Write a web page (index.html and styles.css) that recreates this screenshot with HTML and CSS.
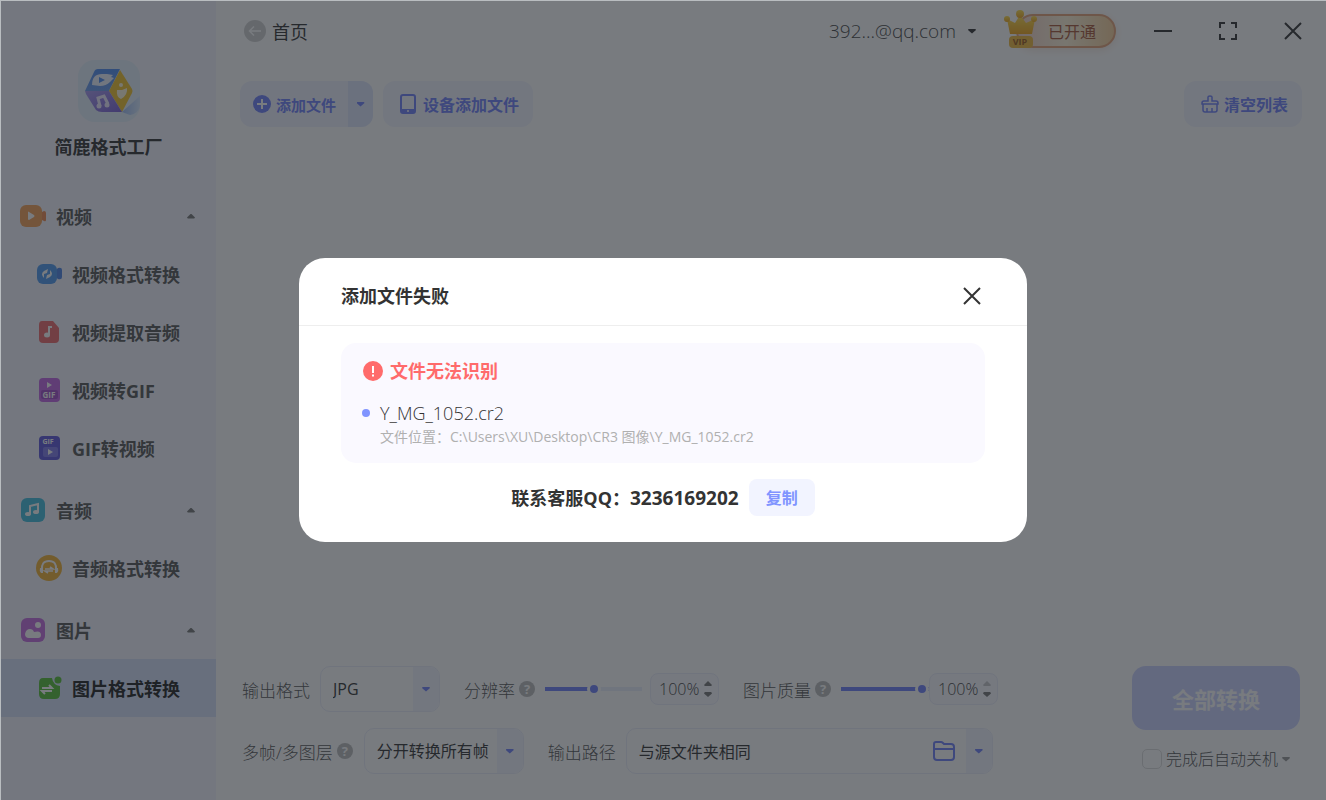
FILE: index.html
```html
<!DOCTYPE html>
<html lang="zh-CN">
<head>
    <meta charset="UTF-8">
    <meta name="viewport" content="width=device-width, initial-scale=1.0">
    <title>简鹿格式工厂</title>
    <link rel="stylesheet" href="styles.css">
</head>
<body>

<div class="app">
    <aside class="sidebar">
        <div class="brand">
            <svg class="logo" viewBox="0 0 62 62">
                <defs>
                    <linearGradient id="lb" x1="0" y1="0" x2="0" y2="1"><stop offset="0" stop-color="#4f8df2"/><stop offset="1" stop-color="#6c9cec"/></linearGradient>
                    <linearGradient id="lp" x1="0" y1="0" x2="1" y2="1"><stop offset="0" stop-color="#a99af0"/><stop offset="1" stop-color="#7a5fd8"/></linearGradient>
                    <linearGradient id="ls" x1="0" y1="0" x2="1" y2="0"><stop offset="0" stop-color="#9dbdf5"/><stop offset="1" stop-color="#d9e9ff"/></linearGradient>
                </defs>
                <rect width="62" height="62" rx="17" fill="#e3effc"/>
                <path d="M44 52 L62 36 V46 Q60 54 52 55 Z" fill="url(#ls)"/>
                <path d="M20 9 H42 L31 31 H7 L16 12 Q17 9 20 9Z" fill="url(#lb)"/>
                <path d="M42 10 L54 29 Q55 31 54 33 L44 52 L31 31Z" fill="#f2c42c"/>
                <path d="M7 31 H31 L44 52 H24 Q20 52 18 50 L8 34Z" fill="url(#lp)"/>
                <path d="M14 25 Q14 14 24 14 H29 L35 15 L33 17 L36 18 L32 22 Q28 26 22 26Z" fill="#eef3ff"/>
                <path d="M21 17 l6 3 -6 3z" fill="#4f8df2"/>
                <path d="M22 46 L20 38 L26 36 L30 44" fill="none" stroke="#eee9ff" stroke-width="3"/>
                <circle cx="21" cy="46" r="2.500" fill="#eee9ff"/>
                <circle cx="29" cy="45" r="2.500" fill="#eee9ff"/>
                <circle cx="43" cy="25" r="2" fill="#fff8dd"/>
                <path d="M39 30 l5 0 5 -2 q1 7 -6 11 q-5 -2 -4 -9z" fill="#fff8dd"/>
            </svg>
            <h1>简鹿格式工厂</h1>
        </div>

        <nav class="menu">
            <section class="group">
                <button class="group-title" type="button">
                    <svg class="icon" viewBox="0 0 26 26">
                        <path d="M20 10 L24 8 Q26 8 26 10 V17 Q26 19 24 18 L20 16Z" fill="#f08a50"/>
                        <rect y="2" width="22" height="22" rx="6" fill="#f6a155"/>
                        <path d="M8 9 Q8 8 9 9 L14 12 Q15 13 14 14 L9 17 Q8 17 8 16Z" fill="#fff"/>
                    </svg>
                    视频
                    <span class="up"></span>
                </button>
                <a class="item" href="#">
                    <svg class="icon" viewBox="0 0 26 26">
                        <path d="M18 11 L22 7 Q26 6 26 9 V16 Q26 19 22 18 L18 15Z" fill="#4b82e6"/>
                        <rect x="1" y="3" width="20" height="20" rx="6" fill="#4f9af0"/>
                        <path d="M8 17 Q4 13 8 10 L12 8 L11 12 L8 13Z M14 9 Q18 13 14 16 L10 18 L11 14 L14 13Z" fill="#fff"/>
                    </svg>
                    视频格式转换
                </a>
                <a class="item" href="#">
                    <svg class="icon" viewBox="0 0 26 26">
                        <path d="M6 2 H17 L23 9 V20 Q23 24 19 24 H7 Q3 24 3 20 V6 Q3 2 6 2Z" fill="#ef6a6c"/>
                        <ellipse cx="11" cy="16" rx="3" ry="2.500" fill="#fff"/>
                        <path d="M13 16 V8 L16 8" fill="none" stroke="#fff" stroke-width="2"/>
                    </svg>
                    视频提取音频
                </a>
                <a class="item" href="#">
                    <svg class="icon" viewBox="0 0 26 26">
                        <rect x="3" y="1" width="21" height="24" rx="4" fill="#c264e6"/>
                        <path d="M11 5 l5 3 -5 3z" fill="#fff"/>
                        <rect x="5" y="13" width="17" height="9" rx="2" fill="#a04bc8"/>
                        <text x="13" y="21" text-anchor="middle" class="gif-text">GIF</text>
                    </svg>
                    视频转GIF
                </a>
                <a class="item" href="#">
                    <svg class="icon" viewBox="0 0 26 26">
                        <rect x="3" y="1" width="21" height="24" rx="4" fill="#5c55dc"/>
                        <text x="12" y="9" text-anchor="middle" class="gif-text small">GIF</text>
                        <rect x="7" y="12" width="15" height="10" rx="2" fill="#817bea"/>
                        <path d="M12 14 l5 3 -5 3z" fill="#fff"/>
                    </svg>
                    GIF转视频
                </a>
            </section>

            <section class="group">
                <button class="group-title" type="button">
                    <svg class="icon" viewBox="0 0 26 26">
                        <rect x="1" y="1" width="24" height="24" rx="6" fill="#42bfdf"/>
                        <path d="M10 17 V9 L18 7 V15" fill="none" stroke="#fff" stroke-width="2"/>
                        <ellipse cx="8" cy="17" rx="3" ry="2" fill="#fff"/>
                        <ellipse cx="16" cy="15" rx="3" ry="2" fill="#fff"/>
                    </svg>
                    音频
                    <span class="up"></span>
                </button>
                <a class="item" href="#">
                    <svg class="icon" viewBox="0 0 26 26">
                        <circle cx="13" cy="13" r="13" fill="#f2b133"/>
                        <path d="M6 15 Q5 6 13 6 Q21 6 20 15" fill="none" stroke="#fff" stroke-width="2"/>
                        <path d="M4 13 h3 v5 h-2 q-2 -2 -1 -5z M22 13 h-3 v5 h2 q2 -2 1 -5z" fill="#fff"/>
                        <path d="M9 14 H17 L14 12 M17 16 H9 L12 18" fill="none" stroke="#fff" stroke-width="1.600"/>
                    </svg>
                    音频格式转换
                </a>
            </section>

            <section class="group">
                <button class="group-title" type="button">
                    <svg class="icon" viewBox="0 0 26 26">
                        <rect x="1" y="1" width="24" height="24" rx="6" fill="#c56be0"/>
                        <circle cx="18" cy="8" r="3" fill="#fff"/>
                        <path d="M9 21 Q5 21 5 17 Q6 12 10 12 Q13 12 14 15 Q21 13 21 18 Q21 21 18 21Z" fill="#fff"/>
                    </svg>
                    图片
                    <span class="up"></span>
                </button>
                <a class="item active" href="#">
                    <svg class="icon" viewBox="0 0 26 26">
                        <path d="M7 3 H16 Q17 10 24 11 V19 Q24 24 19 24 H8 Q3 24 3 19 V8 Q3 3 7 3Z" fill="#55bf35"/>
                        <circle cx="22" cy="5" r="3.500" fill="#55bf35"/>
                        <path d="M6 13 H16 L13 10 M16 16 H6 L9 19" fill="none" stroke="#fff" stroke-width="2"/>
                    </svg>
                    图片格式转换
                </a>
            </section>
        </nav>
    </aside>

    <main class="main">
        <header class="topbar">
            <a class="home" href="#">
                <svg width="22" height="22" viewBox="0 0 22 22">
                    <circle cx="11" cy="11" r="11" fill="#d0d0d0"/>
                    <path d="M17 11 H6 M10 6.500 L5.500 11 L10 15.500" fill="none" stroke="#fff" stroke-width="1.500"/>
                </svg>
                首页
            </a>
            <button class="account" type="button">392...@qq.com <span class="down"></span></button>
            <button class="vip" type="button">
                <svg class="crown" viewBox="0 0 34 40">
                    <defs><linearGradient id="gold" x1="0" y1="0" x2="0" y2="1"><stop offset="0" stop-color="#ffdf4d"/><stop offset="1" stop-color="#f0a51a"/></linearGradient></defs>
                    <path d="M3 9 L11 13 L16 5 L22 13 L31 9 L28 24 H6Z" fill="url(#gold)"/>
                    <circle cx="3" cy="9" r="3" fill="url(#gold)"/>
                    <circle cx="16" cy="4" r="4" fill="url(#gold)"/>
                    <circle cx="30" cy="9" r="3" fill="url(#gold)"/>
                    <rect x="5" y="26" width="24" height="12" rx="4" fill="#f0b93c"/>
                    <text x="16" y="35" text-anchor="middle" class="vip-text">VIP</text>
                </svg>
                已开通
            </button>
            <div class="window-buttons">
                <button type="button" aria-label="最小化"><svg width="18" height="18" viewBox="0 0 18 18"><path d="M0 9 H18"/></svg></button>
                <button type="button" aria-label="最大化"><svg width="18" height="18" viewBox="0 0 18 18"><path d="M1 6 V1 H6 M12 1 H17 V6 M17 12 V17 H12 M6 17 H1 V12"/></svg></button>
                <button type="button" aria-label="关闭"><svg width="18" height="18" viewBox="0 0 18 18"><path d="M1 1 L17 17 M17 1 L1 17"/></svg></button>
            </div>
        </header>

        <div class="toolbar">
            <div class="split">
                <button class="split-main" type="button">
                    <svg width="18" height="18" viewBox="0 0 18 18">
                        <circle cx="9" cy="9" r="9" fill="#6f80fb"/>
                        <path d="M4 9 H14 M9 4 V14" stroke="#fff" stroke-width="2"/>
                    </svg>
                    添加文件
                </button>
                <button class="split-arrow" type="button" aria-label="更多"><span class="down"></span></button>
            </div>
            <button class="tool" type="button">
                <svg width="16" height="20" viewBox="0 0 16 20">
                    <rect x="1" y="1" width="14" height="18" rx="2" fill="none" stroke="#6f80fb" stroke-width="2"/>
                    <path d="M1 15 H15 V19 H1Z" fill="#6f80fb"/>
                    <circle cx="8" cy="17" r="1" fill="#fff"/>
                </svg>
                设备添加文件
            </button>
            <button class="tool clear" type="button">
                <svg width="18" height="18" viewBox="0 0 18 18" fill="none" stroke="#6f80fb" stroke-width="1.500">
                    <path d="M7 6 V2 Q7 1 9 1 Q11 1 11 2 V6 H15 Q17 6 17 8 V9 H1 V8 Q1 6 3 6Z M2 9 V15 Q2 17 4 17 H14 Q16 17 16 15 V9 M6 13 V17 M11 13 V17"/>
                </svg>
                清空列表
            </button>
        </div>

        <div class="file-area"></div>

        <footer class="settings">
            <div class="options">
                <div class="row">
                    <label for="format">输出格式</label>
                    <div class="select format">
                        <select id="format"><option>JPG</option></select>
                        <span class="arrow"><span class="down"></span></span>
                    </div>
                    <label class="next" for="resolution">分辨率</label>
                    <span class="help">?</span>
                    <input class="range" id="resolution" type="range" min="0" max="200" value="100" style="--value: 50%">
                    <div class="spin">
                        <input type="text" value="100%" aria-label="分辨率百分比">
                        <div class="steps">
                            <button type="button" aria-label="增加"><span class="up"></span></button>
                            <button type="button" aria-label="减少"><span class="down"></span></button>
                        </div>
                    </div>
                    <label class="next" for="quality">图片质量</label>
                    <span class="help">?</span>
                    <input class="range short" id="quality" type="range" min="0" max="100" value="100" style="--value: 100%">
                    <div class="spin">
                        <input type="text" value="100%" aria-label="图片质量百分比">
                        <div class="steps">
                            <button type="button" aria-label="增加" disabled><span class="up"></span></button>
                            <button type="button" aria-label="减少"><span class="down"></span></button>
                        </div>
                    </div>
                </div>
                <div class="row">
                    <label for="frames">多帧/多图层</label>
                    <span class="help">?</span>
                    <div class="select frames">
                        <select id="frames"><option>分开转换所有帧</option></select>
                        <span class="arrow"><span class="down"></span></span>
                    </div>
                    <label class="next" for="path">输出路径</label>
                    <div class="select path">
                        <input id="path" type="text" value="与源文件夹相同">
                        <button class="folder" type="button" aria-label="选择文件夹">
                            <svg width="22" height="20" viewBox="0 0 22 20" fill="none" stroke="#6f80fb" stroke-width="2">
                                <path d="M1 8 V3 Q1 1 3 1 H8 Q9 1 10 2 L11 3 H18 Q21 3 21 6 V16 Q21 19 18 19 H4 Q1 19 1 16 V8 H21"/>
                            </svg>
                        </button>
                        <button class="arrow" type="button" aria-label="更多路径"><span class="down"></span></button>
                    </div>
                </div>
            </div>
            <div class="actions">
                <button class="convert" type="button">全部转换</button>
                <label class="shutdown"><input type="checkbox">完成后自动关机<span class="down"></span></label>
            </div>
        </footer>
    </main>

    <div class="overlay">
        <div class="modal" role="dialog" aria-labelledby="modal-title">
            <div class="modal-header">
                <h2 id="modal-title">添加文件失败</h2>
                <button class="close" type="button" aria-label="关闭">
                    <svg width="18" height="18" viewBox="0 0 18 18"><path d="M1 1 L17 17 M17 1 L1 17"/></svg>
                </button>
            </div>
            <div class="error-box">
                <h3>
                    <svg width="20" height="20" viewBox="0 0 20 20">
                        <circle cx="10" cy="10" r="10" fill="#ff6b6b"/>
                        <path d="M10 5 V12 M10 13.500 V15.500" stroke="#fff" stroke-width="2"/>
                    </svg>
                    文件无法识别
                </h3>
                <ul>
                    <li>
                        <p class="file-name">Y_MG_1052.cr2</p>
                        <p class="file-path">文件位置：C:\Users\XU\Desktop\CR3 图像\Y_MG_1052.cr2</p>
                    </li>
                </ul>
            </div>
            <div class="contact">
                <p>联系客服QQ：<span class="number">3236169202</span></p>
                <button type="button">复制</button>
            </div>
        </div>
    </div>
</div>

</body>
</html>
```

FILE: styles.css
```css
* {
    box-sizing: border-box;
}

body {
    margin: 0;
    font-family: "Open Sans", "Noto Sans CJK SC", sans-serif;
    font-size: 16px;
    font-weight: 300;
    color: #333;
    background: #fff;
}

button, input, select {
    font: inherit;
    color: inherit;
    border: 0;
    padding: 0;
    margin: 0;
    background: none;
}

button {
    display: flex;
    align-items: center;
    justify-content: center;
    cursor: pointer;
    white-space: nowrap;
}

a {
    color: inherit;
    text-decoration: none;
}

h1, h2, h3, p, ul {
    margin: 0;
    padding: 0;
}

h1, h2, h3 {
    font-size: 18px;
    line-height: 26px;
}

svg {
    display: block;
    flex: none;
}

.app {
    position: relative;
    display: flex;
    min-height: 100vh;
    border-top: 1px solid #b9bdc0;
    border-left: 1px solid #b9bdc0;
}

/* small arrows */
.up, .down {
    width: 8px;
    height: 5px;
    background: #777;
    flex: none;
}

.up {
    clip-path: polygon(50% 0, 100% 80%, 90% 100%, 10% 100%, 0 80%);
}

.down {
    clip-path: polygon(10% 0, 90% 0, 100% 30%, 50% 100%, 0 30%);
}

/* sidebar */
.sidebar {
    width: 215px;
    flex: none;
    background: #f4f6fe;
}

.brand {
    display: flex;
    flex-direction: column;
    align-items: center;
    gap: 12px;
    padding: 59px 0 27px;
}

.logo {
    width: 62px;
    height: 62px;
}

.group + .group {
    margin-top: 4px;
}

.group-title, .item {
    display: flex;
    align-items: center;
    justify-content: flex-start;
    gap: 10px;
    width: 100%;
    height: 58px;
    padding: 0 21px 0 19px;
    font-size: 18px;
    font-weight: bold;
    color: #555;
}

.item {
    padding-left: 35px;
}

.item.active {
    background: #d8e2fb;
    color: #222;
}

.group-title .up {
    margin-left: auto;
}

.icon {
    width: 26px;
    height: 26px;
}

.gif-text {
    font: bold 8px "Open Sans", sans-serif;
    fill: #fff;
}

.gif-text.small {
    font-size: 7px;
}

/* main */
.main {
    flex: 1;
    min-width: 0;
    display: flex;
    flex-direction: column;
    padding: 0 24px;
}

.topbar {
    display: flex;
    align-items: center;
    height: 60px;
}

.home {
    display: flex;
    align-items: center;
    gap: 6px;
    padding-left: 4px;
    font-size: 18px;
    font-weight: 400;
}

.account {
    gap: 12px;
    margin-left: auto;
    font-size: 19px;
    color: #444;
}

.account .down {
    background: #333;
}

.vip {
    position: relative;
    height: 34px;
    margin-left: 40px;
    padding: 0 18px 0 30px;
    border: 2px solid #e5a478;
    border-radius: 17px;
    background: linear-gradient(90deg, #f3d2c8, #fff3d8 50%, #f6cf9a);
    box-shadow: 0 2px 8px #f5e6dc;
    color: #a9583a;
    font-weight: 400;
}

.crown {
    position: absolute;
    left: -14px;
    top: -6px;
    width: 34px;
    height: 40px;
}

.vip-text {
    font: bold 9px "Open Sans", sans-serif;
    fill: #9a5a1c;
}

.window-buttons {
    display: flex;
    gap: 47px;
    margin-left: 38px;
}

.window-buttons path, .close path {
    fill: none;
    stroke: #333;
    stroke-width: 2;
}

.toolbar {
    display: flex;
    gap: 10px;
    margin-top: 20px;
    font-weight: bold;
    color: #6f80fb;
}

.split {
    display: flex;
    height: 46px;
    border-radius: 12px;
    overflow: hidden;
    background: #eff2ff;
}

.split-main {
    gap: 5px;
    padding: 0 12px 0 13px;
    font-size: 15px;
}

.split-arrow {
    width: 25px;
    background: #dfe6fd;
}

.toolbar .down, .select .down {
    background: #6f80fb;
}

.tool {
    gap: 7px;
    height: 46px;
    padding: 0 14px 0 17px;
    border-radius: 12px;
    background: #f3f5ff;
}

.tool.clear {
    gap: 5px;
    margin-left: auto;
}

.file-area {
    flex: 1;
}

/* output settings */
.settings {
    display: flex;
    justify-content: space-between;
    align-items: flex-start;
    padding: 0 2px 26px;
}

.options {
    display: flex;
    flex-direction: column;
    gap: 16px;
}

.row {
    display: flex;
    align-items: center;
    height: 46px;
}

.row label {
    font-size: 17px;
    color: #555;
    white-space: nowrap;
}

.row .next {
    margin-left: 24px;
}

.help {
    width: 16px;
    height: 16px;
    margin-left: 4px;
    border-radius: 50%;
    background: #bbb;
    color: #fff;
    font-size: 13px;
    font-weight: bold;
    line-height: 16px;
    text-align: center;
}

.select {
    display: flex;
    height: 46px;
    margin-left: 10px;
    border: 1px solid #eceefb;
    border-radius: 10px;
    overflow: hidden;
    font-weight: 400;
}

.select select, .select input {
    flex: 1;
    min-width: 0;
    padding-left: 12px;
    appearance: none;
}

.format {
    width: 120px;
}

.frames {
    width: 160px;
    margin-left: 11px;
}

.path {
    width: 367px;
}

.arrow {
    display: flex;
    align-items: center;
    justify-content: center;
    width: 26px;
    background: #f3f5ff;
}

.folder {
    width: 44px;
}

.range {
    appearance: none;
    width: 97px;
    height: 14px;
    margin: 0 8px 0 10px;
    background: linear-gradient(90deg, #6f80fb var(--value), #eceffd var(--value)) center / 100% 4px no-repeat;
}

.range.short {
    width: 88px;
    margin-right: 0;
}

.range::-webkit-slider-thumb {
    appearance: none;
    width: 14px;
    height: 14px;
    border: 3px solid #fff;
    border-radius: 50%;
    background: #6f80fb;
}

.spin {
    display: flex;
    align-items: center;
    width: 69px;
    height: 32px;
    border: 1px solid #eceefb;
    border-radius: 8px;
    background: #fafaff;
    color: #444;
}

.spin input {
    flex: 1;
    min-width: 0;
    padding-left: 8px;
}

.steps {
    display: flex;
    flex-direction: column;
    gap: 6px;
    margin-right: 6px;
}

.steps button:disabled {
    opacity: 0.4;
}

.actions {
    display: flex;
    flex-direction: column;
    align-items: center;
    gap: 16px;
}

.convert {
    width: 168px;
    height: 64px;
    border-radius: 14px;
    background: #cbd2ff;
    color: #fff;
    font-size: 22px;
    font-weight: bold;
}

.shutdown {
    display: flex;
    align-items: center;
    gap: 4px;
    color: #555;
    line-height: 26px;
}

.shutdown input {
    appearance: none;
    width: 20px;
    height: 20px;
    border: 1px solid #ddd;
    border-radius: 5px;
}

.shutdown .down {
    background: #999;
}

/* dialog */
.overlay {
    position: absolute;
    inset: 0;
    display: flex;
    align-items: center;
    justify-content: center;
    padding: 0 1px 1px 0;
    background: rgba(30, 35, 42, 0.6);
}

.modal {
    width: 728px;
    border-radius: 26px;
    background: #fff;
}

.modal-header {
    display: flex;
    align-items: center;
    justify-content: space-between;
    height: 68px;
    padding: 8px 46px 0 42px;
    border-bottom: 1px solid #eee;
}

.error-box {
    margin: 17px 42px 16px;
    padding: 15px 22px;
    border-radius: 15px;
    background: #faf9ff;
}

.error-box h3 {
    display: flex;
    align-items: center;
    gap: 7px;
    color: #ff6b6b;
}

.error-box ul {
    margin-top: 16px;
    list-style: none;
}

.error-box li {
    position: relative;
    padding-left: 17px;
}

.error-box li::before {
    content: "";
    position: absolute;
    left: -1px;
    top: 9px;
    width: 8px;
    height: 8px;
    border-radius: 50%;
    background: #8094ff;
}

.file-name {
    font-size: 18px;
    line-height: 26px;
}

.file-path {
    font-size: 14px;
    font-weight: 400;
    line-height: 22px;
    color: #b0b0b0;
}

.contact {
    display: flex;
    align-items: center;
    justify-content: center;
    gap: 10px;
    padding-bottom: 26px;
    font-size: 18px;
    font-weight: bold;
    line-height: 26px;
}

.number {
    font-size: 19px;
}

.contact button {
    width: 66px;
    height: 37px;
    border-radius: 8px;
    background: #f2f4ff;
    color: #8094ff;
    font-size: 16px;
}
```
